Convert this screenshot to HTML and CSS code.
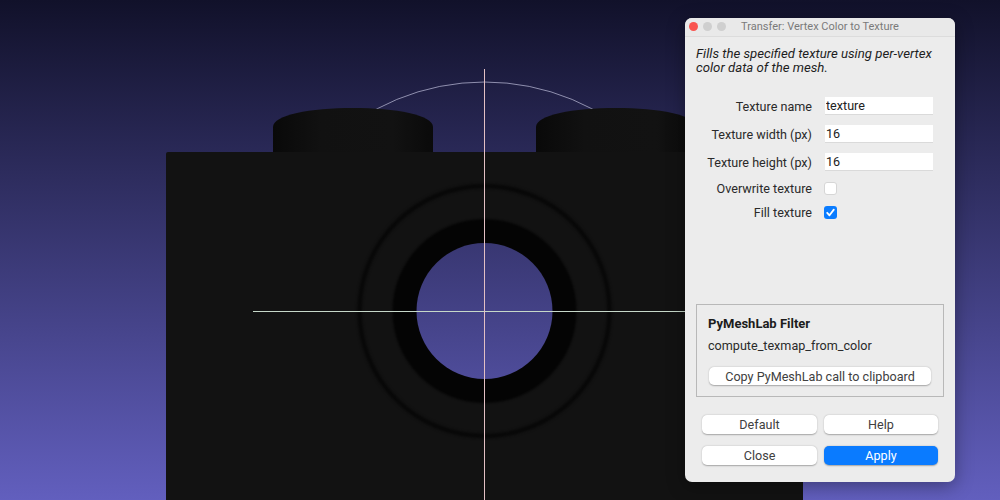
FILE: index.html
```html
<!DOCTYPE html>
<html lang="en">
<head>
  <meta charset="UTF-8">
  <title>Transfer: Vertex Color to Texture</title>
  <link rel="stylesheet" href="styles.css">
</head>
<body>

  <div class="viewport">
    <svg class="scene" width="1000" height="500" viewBox="0 0 1000 500">
      <defs>
        <linearGradient id="sky" gradientUnits="userSpaceOnUse" x1="0" y1="0" x2="0" y2="500">
          <stop offset="0" stop-color="#11112a"/>
          <stop offset="1" stop-color="#625fbe"/>
        </linearGradient>
        <linearGradient id="stud" x1="0" y1="0" x2="1" y2="0">
          <stop offset="0" stop-color="#090909"/>
          <stop offset="0.3" stop-color="#111111"/>
          <stop offset="0.75" stop-color="#121212"/>
          <stop offset="1" stop-color="#0a0a0a"/>
        </linearGradient>
        <filter id="soft" x="-10%" y="-10%" width="120%" height="120%" color-interpolation-filters="sRGB">
          <feGaussianBlur stdDeviation="1.4"/>
        </filter>
        <filter id="edge" x="-10%" y="-10%" width="120%" height="120%" color-interpolation-filters="sRGB">
          <feGaussianBlur stdDeviation="0.8"/>
        </filter>
      </defs>

      <rect width="1000" height="500" fill="url(#sky)"/>

      <!-- trackball arc -->
      <circle cx="484.5" cy="311" r="229" fill="none" stroke="#8f8fae" stroke-width="1"/>

      <!-- studs -->
      <path d="M273 153V127C273 115 310 108 353 108S433 115 433 127V153Z" fill="url(#stud)"/>
      <path d="M536 153V127C536 115 573 108 616 108S696 115 696 127V153Z" fill="url(#stud)"/>

      <!-- block -->
      <path d="M168 152H801Q803 152 803 154V500H166V154Q166 152 168 152Z" fill="#121212"/>
      <circle cx="484.5" cy="311" r="125" fill="none" stroke="#060606" stroke-width="4" filter="url(#soft)"/>
      <circle cx="484.5" cy="311" r="92" fill="#040404" filter="url(#edge)"/>
      <circle cx="484.5" cy="311" r="68" fill="url(#sky)"/>

      <!-- axes -->
      <line x1="253" y1="311.5" x2="716" y2="311.5" stroke="#c6d8c9" stroke-width="1"/>
      <line x1="484.5" y1="69" x2="484.5" y2="500" stroke="#e3c0c4" stroke-width="1"/>
    </svg>

    <div class="dialog">
      <div class="titlebar">
        <div class="lights">
          <span class="light red"></span>
          <span class="light"></span>
          <span class="light"></span>
        </div>
        <div class="title">Transfer: Vertex Color to Texture</div>
      </div>

      <div class="content">
        <p class="desc">Fills the specified texture using per-vertex color data of the mesh.</p>

        <div class="form">
          <div class="row row-input">
            <label>Texture name</label>
            <input class="field" type="text" value="texture">
          </div>
          <div class="row row-input">
            <label>Texture width (px)</label>
            <input class="field" type="text" value="16">
          </div>
          <div class="row row-input">
            <label>Texture height (px)</label>
            <input class="field" type="text" value="16">
          </div>
          <div class="row row-check">
            <label>Overwrite texture</label>
            <span class="check"></span>
          </div>
          <div class="row row-check">
            <label>Fill texture</label>
            <span class="check checked">
              <svg width="13" height="13" viewBox="0 0 13 13">
                <path d="M3.2 6.8L5.5 9.3L9.8 3.6" fill="none" stroke="#fff" stroke-width="1.8" stroke-linecap="round" stroke-linejoin="round"/>
              </svg>
            </span>
          </div>
        </div>

        <div class="group">
          <div class="group-title">PyMeshLab Filter</div>
          <div class="group-name">compute_texmap_from_color</div>
          <button class="btn btn-wide">Copy PyMeshLab call to clipboard</button>
        </div>

        <div class="actions">
          <button class="btn">Default</button>
          <button class="btn">Help</button>
          <button class="btn">Close</button>
          <button class="btn btn-primary">Apply</button>
        </div>
      </div>
    </div>
  </div>

</body>
</html>
```

FILE: styles.css
```css
html, body {
  margin: 0;
  padding: 0;
  overflow: hidden;
}

body {
  font-family: Roboto, "Liberation Sans", Arial, sans-serif;
  font-size: 12.6px;
  color: #2a2a2a;
}

.viewport {
  position: relative;
  width: 1000px;
  height: 500px;
  overflow: hidden;
}

.scene {
  display: block;
}

.dialog {
  position: absolute;
  left: 685px;
  top: 18px;
  width: 270px;
  height: 464px;
  display: flex;
  flex-direction: column;
  background: #ececec;
  border-radius: 7px;
  box-shadow: 0 4px 18px rgba(0, 0, 0, 0.35);
}

.titlebar {
  position: relative;
  flex: none;
  height: 18px;
  border-bottom: 1px solid #dcdcdc;
  background: #e9e9e9;
  border-radius: 7px 7px 0 0;
}

.lights {
  position: absolute;
  left: 4px;
  top: 4px;
  display: flex;
  gap: 5px;
}

.light {
  width: 9px;
  height: 9px;
  border-radius: 50%;
  background: #cfcfcf;
}

.light.red {
  background: #f9544f;
}

.title {
  text-align: center;
  font-size: 11px;
  line-height: 18px;
  color: #7a7a7a;
}

.content {
  flex: 1;
  display: flex;
  flex-direction: column;
  padding: 0 11px;
}

.desc {
  margin: 10px 0 0;
  font-size: 13.2px;
  font-style: italic;
  line-height: 14px;
  color: #1e1e1e;
  width: 245px;
}

.form {
  margin-top: 22px;
}

.row {
  display: flex;
  align-items: center;
}

.row label {
  width: 116px;
  text-align: right;
  margin-right: 13px;
  flex: none;
}

.row-input {
  height: 18px;
  margin-bottom: 10px;
}

.row-check {
  height: 14px;
  margin-bottom: 10px;
}

.row-check label {
  margin-right: 12px;
}

.field {
  box-sizing: border-box;
  width: 108px;
  height: 18px;
  padding: 0 1px;
  border: 0;
  border-bottom: 1px solid #dadada;
  background: #fff;
  font: inherit;
  color: #222;
  outline: none;
}

.check {
  box-sizing: border-box;
  width: 13px;
  height: 13px;
  border: 1px solid #d6d6d6;
  border-radius: 3px;
  background: #fff;
  display: block;
}

.check.checked {
  border: 0;
  background: #0a7cff;
}

.check svg {
  display: block;
}

.group {
  box-sizing: border-box;
  margin-top: 75px;
  width: 248px;
  height: 93px;
  border: 1px solid #b8b8b8;
  padding: 11px 11px 0;
}

.group-title {
  font-size: 13px;
  font-weight: bold;
  line-height: 15px;
  color: #1c1c1c;
}

.group-name {
  margin-top: 7px;
  line-height: 15px;
}

.btn {
  box-sizing: border-box;
  height: 19px;
  padding: 0;
  border: 0;
  border-radius: 5px;
  background: #fff;
  box-shadow: 0 0.5px 1.5px rgba(0, 0, 0, 0.3);
  font: inherit;
  color: #404040;
  text-align: center;
}

.btn-wide {
  display: block;
  width: 222px;
  margin: 14px 0 0 1px;
  height: 18px;
}

.btn-primary {
  background: #0a7bff;
  color: #fff;
}

.actions {
  margin: 18px 6px 0;
  display: grid;
  grid-template-columns: 115px 114px;
  column-gap: 7px;
  row-gap: 12px;
}
```
